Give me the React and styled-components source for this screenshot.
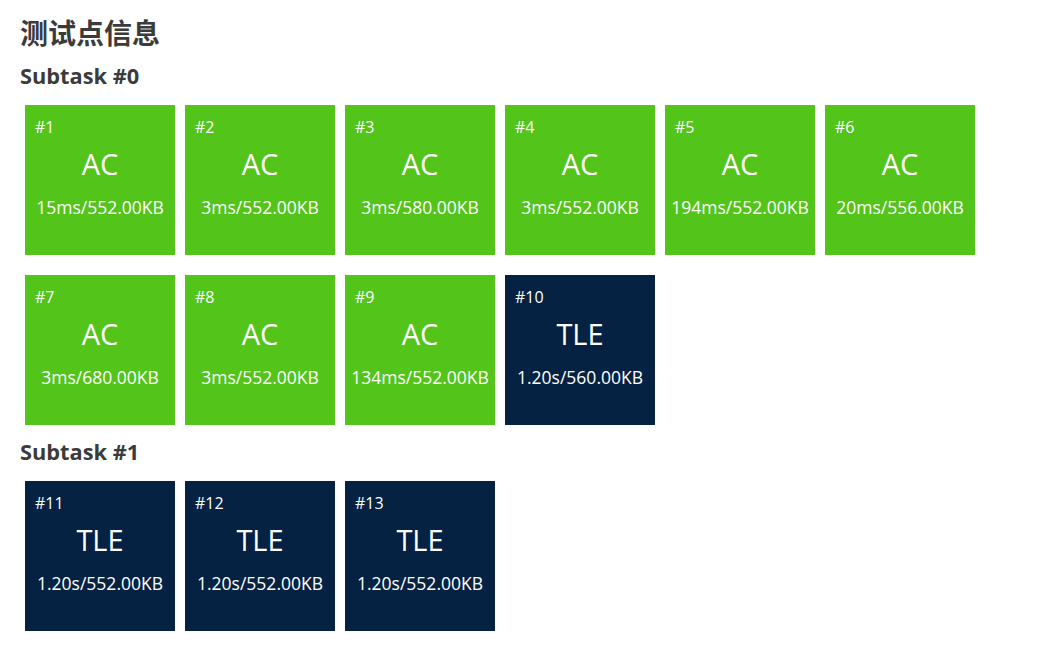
import React from "react";
import styled, { createGlobalStyle } from "styled-components";

const GlobalStyle = createGlobalStyle`
  body {
    margin: 0;
    background: #fff;
    font-family: "Open Sans", "Noto Sans CJK SC", sans-serif;
  }
`

const Page = styled.div`
  padding: 14px 20px 0;
`

const Title = styled.h2`
  margin: 0 0 11px;
  font-size: 28px;
  line-height: 36px;
  font-weight: 700;
  color: #3b3b3b;
  font-family: "Noto Sans CJK SC", "Open Sans", sans-serif;
`

const SubtaskTitle = styled.h3`
  margin: 0;
  font-size: 21.8px;
  line-height: 30px;
  font-weight: 700;
  color: #3b3b3b;
`

const Grid = styled.div`
  display: flex;
  flex-wrap: wrap;
  gap: 20px 10px;
  padding: 14px 5px 12px;
`

const Case = styled.div`
  width: 150px;
  height: 150px;
  box-sizing: border-box;
  padding-top: 10px;
  background: ${props => (props.status === "AC" ? "#52c41a" : "#052242")};
  color: #fff;
  display: flex;
  flex-direction: column;
`

const CaseId = styled.div`
  font-size: 16px;
  line-height: 24px;
  padding-left: 10px;
`

const Status = styled.div`
  font-size: 29px;
  line-height: 36px;
  text-align: center;
  margin-top: 7px;
`

const Usage = styled.div`
  font-size: 17.5px;
  line-height: 24px;
  text-align: center;
  margin-top: 13px;
  white-space: nowrap;
`

const subtasks = [
  {
    name: "Subtask #0",
    cases: [
      ["AC", "15ms/552.00KB"],
      ["AC", "3ms/552.00KB"],
      ["AC", "3ms/580.00KB"],
      ["AC", "3ms/552.00KB"],
      ["AC", "194ms/552.00KB"],
      ["AC", "20ms/556.00KB"],
      ["AC", "3ms/680.00KB"],
      ["AC", "3ms/552.00KB"],
      ["AC", "134ms/552.00KB"],
      ["TLE", "1.20s/560.00KB"],
    ],
  },
  {
    name: "Subtask #1",
    cases: [
      ["TLE", "1.20s/552.00KB"],
      ["TLE", "1.20s/552.00KB"],
      ["TLE", "1.20s/552.00KB"],
    ],
  },
]

export default function App() {
  let n = 0
  return (
    <>
      <GlobalStyle />
      <Page>
        <Title>测试点信息</Title>
        {subtasks.map(st => (
          <React.Fragment key={st.name}>
            <SubtaskTitle>{st.name}</SubtaskTitle>
            <Grid>
              {st.cases.map(([status, usage]) => {
                n += 1
                return (
                  <Case key={n} status={status}>
                    <CaseId>#{n}</CaseId>
                    <Status>{status}</Status>
                    <Usage>{usage}</Usage>
                  </Case>
                )
              })}
            </Grid>
          </React.Fragment>
        ))}
      </Page>
    </>
  )
}
